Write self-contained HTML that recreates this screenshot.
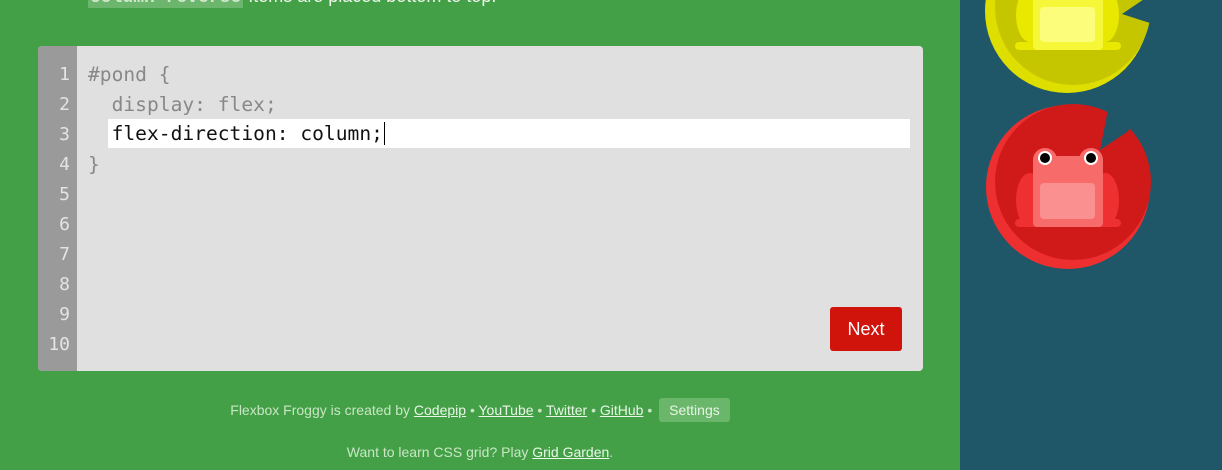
<!DOCTYPE html>
<html><head><style>
html,body{margin:0;width:1222px;height:470px;overflow:hidden}
body{background:#43a047;font-family:"Liberation Sans",sans-serif;position:relative}
#right{position:absolute;left:960px;top:0;width:262px;height:470px;background:#1f5768}
#top{position:absolute;left:88px;top:-14px;font-size:18px;color:#eef7ec;white-space:nowrap}
#top code{font-family:"Liberation Mono",monospace;background:#6cb56c;color:#cfe8cc;font-weight:bold;padding:0 2px}
#ed{position:absolute;left:38px;top:46px;width:885px;height:325px;background:#e0e0e0;border-radius:4px;overflow:hidden}
#gut{position:absolute;left:0;top:0;width:39px;height:325px;background:#9a9a9a}
.ln{position:absolute;left:0;width:32px;text-align:right;font-family:"DejaVu Sans Mono",monospace;font-size:18px;color:#e4e4e4}
.cd{position:absolute;left:50px;font-family:"DejaVu Sans Mono",monospace;font-size:19.6px;color:#888;white-space:pre}
#hl{position:absolute;left:70px;top:73px;width:802px;height:29px;background:#fff}
#next{position:absolute;left:830px;top:307px;width:72px;height:44px;background:#d0130b;border-radius:3px;color:#fff;font-size:18px;text-align:center;line-height:44px}
.ft{position:absolute;left:0;width:960px;text-align:center;font-size:14px;color:#c9e6c4}
.ft u{color:#eaf6e8}
#set{display:inline-block;background:#6ab66a;color:#e8f5e6;padding:4px 10px;border-radius:3px;margin-left:3px}
</style></head><body>
<div id="top"><code>column-reverse</code> Items are placed bottom to top.</div>
<div id="ed">
<div id="gut"></div>
<div id="hl"></div>
<div class="ln" style="top:18px">1</div><div class="ln" style="top:48px">2</div><div class="ln" style="top:78px">3</div><div class="ln" style="top:108px">4</div><div class="ln" style="top:138px">5</div><div class="ln" style="top:168px">6</div><div class="ln" style="top:198px">7</div><div class="ln" style="top:228px">8</div><div class="ln" style="top:258px">9</div><div class="ln" style="top:288px">10</div>
<div class="cd" style="top:17px">#pond {</div>
<div class="cd" style="top:47px">  display: flex;</div>
<div class="cd" style="top:76px;color:#111">  flex-direction: column;<span style="border-left:1px solid #000;margin-left:1px"></span></div>
<div class="cd" style="top:107px">}</div>
</div>
<div id="next">Next</div>
<div class="ft" style="top:398px">Flexbox Froggy is created by <u>Codepip</u> • <u>YouTube</u> • <u>Twitter</u> • <u>GitHub</u> • <span id="set">Settings</span></div>
<div class="ft" style="top:444px">Want to learn CSS grid? Play <u>Grid Garden</u>.</div>
<div id="right">
<svg width="262" height="470" viewBox="960 0 262 470">
 <circle cx="1067" cy="11" r="82" fill="#dede00"/>
 <circle cx="1073" cy="7" r="78" fill="#c6c600"/>
 <path d="M1122 14 L1150 -5 L1180 -5 L1180 28 L1150 23 Z" fill="#1f5768"/>
 <ellipse cx="1030" cy="15" rx="14" ry="27" fill="#e8e800"/>
 <ellipse cx="1105" cy="15" rx="14" ry="27" fill="#e8e800"/>
 <rect x="1015" y="42" width="106" height="8" rx="4" fill="#e8e800"/>
 <rect x="1033" y="-20" width="70" height="70" rx="4" fill="#f7f73a"/>
 <rect x="1040" y="7" width="55" height="35" rx="4" fill="#fdfd7c"/>
 <circle cx="1068" cy="187" r="82" fill="#ee2f2f"/>
 <circle cx="1073" cy="182" r="78" fill="#d01a1a"/>
 <path d="M1100 150 L1110 100 L1150 105 L1127 132 Z" fill="#1f5768"/>
 <ellipse cx="1030" cy="200" rx="14" ry="27" fill="#ee3030"/>
 <ellipse cx="1105" cy="200" rx="14" ry="27" fill="#ee3030"/>
 <rect x="1015" y="219" width="106" height="8" rx="4" fill="#ee3030"/>
 <circle cx="1045" cy="160" r="12" fill="#f76b6b"/>
 <circle cx="1091" cy="160" r="12" fill="#f76b6b"/>
 <rect x="1033" y="156" width="70" height="71" rx="4" fill="#f76b6b"/>
 <rect x="1040" y="183" width="55" height="36" rx="4" fill="#fb9090"/>
 <circle cx="1045" cy="158" r="7" fill="#fff"/><circle cx="1045" cy="158" r="5" fill="#000"/>
 <circle cx="1091" cy="158" r="7" fill="#fff"/><circle cx="1091" cy="158" r="5" fill="#000"/>
</svg>
</div>
</body></html>
